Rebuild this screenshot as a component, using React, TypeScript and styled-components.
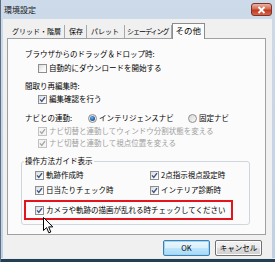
import React from 'react';
import styled, { createGlobalStyle, css } from 'styled-components';

const GlobalStyle = createGlobalStyle`
  html, body {
    margin: 0;
    padding: 0;
  }

  body {
    width: 275px;
    height: 262px;
    overflow: hidden;
    font-family: "Noto Sans CJK JP", "Noto Sans", sans-serif;
    color: #000000;
  }
`;

type CheckProps = {
  checked?: boolean;
  disabled?: boolean;
  children: React.ReactNode;
};

const Check = ({ checked, disabled, children }: CheckProps) => (
  <OptionLabel $disabled={disabled}>
    <CheckBox $disabled={disabled}>
      {checked && (
        <svg width='7' height='7' viewBox='0 0 7 7'>
          <path
            d='M1 3.4 L2.8 5.4 L6 1.2'
            fill='none'
            stroke={disabled ? '#a8a8a8' : '#3d5488'}
            strokeWidth='1.4'
          />
        </svg>
      )}
    </CheckBox>
    {children}
  </OptionLabel>
);

const Radio = ({ checked, children }: { checked?: boolean; children: React.ReactNode }) => (
  <OptionLabel>
    <RadioCircle>{checked && <RadioDot />}</RadioCircle>
    {children}
  </OptionLabel>
);

const App = () => {
  return (
    <>
      <GlobalStyle />
      <Window>
        <TitleBar>
          <Title>環境設定</Title>
          <CloseButton>
            <svg width='9' height='8' viewBox='0 0 9 8'>
              <path d='M1.5 1 L7.5 7 M7.5 1 L1.5 7' stroke='#ffffff' strokeWidth='1.8' />
            </svg>
          </CloseButton>
        </TitleBar>

        <Body>
          <Tabs>
            <Tab>グリッド・階層</Tab>
            <Tab>保存</Tab>
            <Tab $pad={5}>パレット</Tab>
            <Tab $tight>シェーディング</Tab>
            <Tab $active>その他</Tab>
          </Tabs>

          <Panel>
            <Row $mt={9}>ブラウザからのドラッグ＆ドロップ時:</Row>
            <Row $mt={2} $indent={13}>
              <Check>自動的にダウンロードを開始する</Check>
            </Row>

            <Row $mt={6}>間取り再編集時:</Row>
            <Row $mt={1} $indent={13}>
              <Check checked>編集確認を行う</Check>
            </Row>

            <Row $mt={7}>
              <RadioCaption>ナビとの連動:</RadioCaption>
              <RadioSlot $w={100}>
                <Radio checked>インテリジェンスナビ</Radio>
              </RadioSlot>
              <Radio>固定ナビ</Radio>
            </Row>
            <Row $mt={1} $indent={13}>
              <Check checked disabled>
                ナビ切替と連動してウィンドウ分割状態を変える
              </Check>
            </Row>
            <Row $mt={0} $indent={13}>
              <Check checked disabled>
                ナビ切替と連動して視点位置を変える
              </Check>
            </Row>

            <Group>
              <GroupLegend>操作方法ガイド表示</GroupLegend>
              <GuideGrid>
                <Check checked>軌跡作成時</Check>
                <Check checked>2点指示視点設定時</Check>
                <Check checked>日当たりチェック時</Check>
                <Check checked>インテリア診断時</Check>
              </GuideGrid>
              <Highlight>
                <Check checked>カメラや軌跡の描画が乱れる時チェックしてください</Check>
              </Highlight>
            </Group>
          </Panel>

          <ButtonBar>
            <DialogButton $primary>OK</DialogButton>
            <DialogButton>キャンセル</DialogButton>
          </ButtonBar>
        </Body>

        <BottomEdge />

        <Cursor width='12' height='18' viewBox='0 0 12 18'>
          <path
            d='M0.5 0.5 L0.5 13.5 L3.6 10.6 L5.8 15.8 L7.8 15 L5.7 9.9 L9.8 9.9 Z'
            fill='#ffffff'
            stroke='#000000'
            strokeWidth='1'
            strokeLinejoin='round'
          />
        </Cursor>
      </Window>
    </>
  );
};

export default App;

const Window = styled.div`
  position: relative;
  display: flex;
  flex-direction: column;

  width: 275px;
  height: 262px;
  box-sizing: border-box;

  border-left: 1px solid #5d6f83;
  background: linear-gradient(180deg, #cddaea 0%, #c0d0e4 100%);
`;

const TitleBar = styled.div`
  display: flex;
  align-items: center;
  justify-content: space-between;

  height: 19px;
  padding: 0 3px 0 3px;
`;

const Title = styled.span`
  font-size: 8px;
  line-height: 10px;
  color: #1a1a1a;
`;

const CloseButton = styled.div`
  display: flex;
  align-items: center;
  justify-content: center;

  width: 21px;
  height: 13px;
  box-sizing: border-box;

  border: 1px solid #7a3428;
  border-radius: 3px;
  background: linear-gradient(180deg, #eab3a4 0%, #d66a52 45%, #c0391f 55%, #d9644a 100%);
`;

const Body = styled.div`
  flex: 1;
  display: flex;
  flex-direction: column;

  margin: 0 3px 0 2px;
  padding: 4px 6px 0 4px;

  background: #f0f0f0;
`;

const Tabs = styled.div`
  display: flex;
  align-items: flex-end;

  height: 15px;
  padding-left: 1px;
`;

const Tab = styled.div<{ $active?: boolean; $tight?: boolean; $pad?: number }>`
  display: flex;
  align-items: center;
  box-sizing: border-box;

  height: 13px;
  padding: 0 ${({ $pad = 3 }) => $pad}px 0 4px;

  border-right: 1px solid #a8a8a8;

  font-size: 7px;
  line-height: 11px;
  white-space: nowrap;

  ${({ $tight }) =>
    $tight &&
    css`
      padding: 0 2px 0 2px;
      letter-spacing: -1px;
    `}

  ${({ $active }) =>
    $active &&
    css`
      position: relative;
      z-index: 1;

      height: 16px;
      margin-bottom: -1px;
      padding: 0 3px 2px 3px;

      border: 1px solid #8c8c8c;
      border-bottom: none;
      background: #fcfcfc;
      font-size: 8.5px;
    `}
`;

const Panel = styled.div`
  display: flex;
  flex-direction: column;

  height: 197px;
  box-sizing: border-box;

  border: 1px solid #a0a0a0;
  background: #fbfbfb;
`;

const Row = styled.div<{ $mt: number; $indent?: number }>`
  display: flex;
  align-items: center;

  height: 12px;
  margin-top: ${({ $mt }) => $mt}px;
  padding-left: ${({ $indent = 0 }) => 17 + $indent}px;

  font-size: 7.5px;
  line-height: 12px;
  white-space: nowrap;
`;

const RadioCaption = styled.span`
  width: 63px;
`;

const RadioSlot = styled.div<{ $w: number }>`
  width: ${({ $w }) => $w}px;
`;

const OptionLabel = styled.label<{ $disabled?: boolean }>`
  display: flex;
  align-items: center;
  gap: 2px;

  font-size: 7.5px;
  line-height: 12px;
  white-space: nowrap;
  color: ${({ $disabled }) => ($disabled ? '#a0a0a0' : '#000000')};
`;

const CheckBox = styled.span<{ $disabled?: boolean }>`
  display: flex;
  align-items: center;
  justify-content: center;
  flex: 0 0 9px;

  width: 9px;
  height: 9px;
  box-sizing: border-box;

  border: 1px solid ${({ $disabled }) => ($disabled ? '#c2c2c2' : '#8e8f8f')};
  background: ${({ $disabled }) =>
    $disabled ? '#f4f4f4' : 'linear-gradient(135deg, #d9d9d9 0%, #f6f6f6 60%, #ffffff 100%)'};
`;

const RadioCircle = styled.span`
  display: flex;
  align-items: center;
  justify-content: center;
  flex: 0 0 9px;

  width: 9px;
  height: 9px;
  box-sizing: border-box;

  border: 1px solid #8e8f8f;
  border-radius: 50%;
  background: linear-gradient(135deg, #d6d6d6 0%, #f8f8f8 100%);
`;

const RadioDot = styled.span`
  width: 5px;
  height: 5px;
  border-radius: 50%;
  background: radial-gradient(circle at 40% 35%, #6fb2ea 0%, #1f5fa8 60%, #163f78 100%);
`;

const Group = styled.fieldset`
  margin: 6px 15px 0 13px;
  padding: 0 0 4px 0;
  min-width: 0;

  border: 1px solid #d0d7dc;
  border-radius: 3px;
`;

const GroupLegend = styled.legend`
  margin-left: 2px;
  padding: 0 1px;

  font-size: 7.5px;
  line-height: 12px;
  white-space: nowrap;
`;

const GuideGrid = styled.div`
  display: grid;
  grid-template-columns: 115px 1fr;
  row-gap: 3px;

  padding: 2px 0 0 13px;

  > label {
    height: 12px;
  }
`;

const Highlight = styled.div`
  display: flex;
  align-items: center;

  width: 209px;
  height: 20px;
  box-sizing: border-box;
  margin: 4px 0 0 2px;
  padding-left: 9px;

  border: 2px solid #e3141b;
`;

const ButtonBar = styled.div`
  display: flex;
  justify-content: flex-end;
  gap: 5px;

  margin-top: 5px;
  padding-right: 4px;
`;

const DialogButton = styled.button<{ $primary?: boolean }>`
  width: 47px;
  height: 16px;
  padding: 0;

  border: 1px solid ${({ $primary }) => ($primary ? '#3c7fb1' : '#707070')};
  border-radius: 2px;
  background: ${({ $primary }) =>
    $primary
      ? 'linear-gradient(180deg, #eaf6fd 0%, #d9f0fc 50%, #bee6fd 51%, #a7d9f5 100%)'
      : 'linear-gradient(180deg, #f2f2f2 0%, #ebebeb 50%, #dddddd 51%, #cfcfcf 100%)'};
  box-shadow: inset 0 0 0 1px ${({ $primary }) => ($primary ? '#9fd5f3' : '#fcfcfc')};

  font-family: "Noto Sans CJK JP", "Noto Sans", sans-serif;
  font-size: 7.5px;
  line-height: 12px;
  color: #000000;
`;

const BottomEdge = styled.div`
  height: 3px;
  border-top: 1px solid #e4ebf3;
  background: #243f52;
`;

const Cursor = styled.svg`
  position: absolute;
  left: 42px;
  top: 217px;
`;
